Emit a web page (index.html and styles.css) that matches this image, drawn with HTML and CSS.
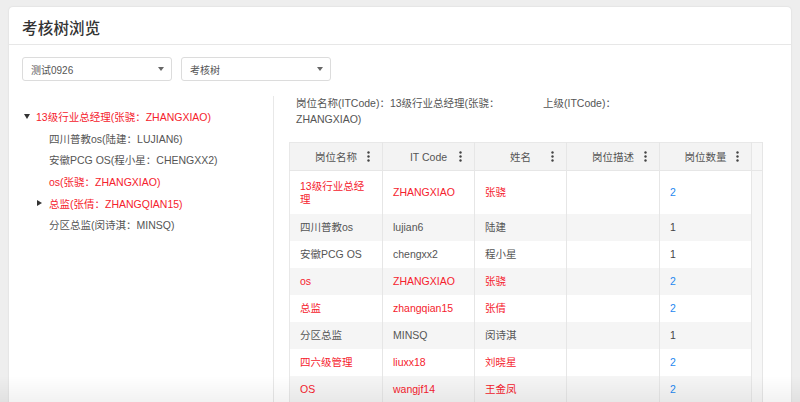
FILE: index.html
```html
<!DOCTYPE html>
<html lang="zh-CN">
<head>
<meta charset="utf-8">
<title>考核树浏览</title>
<link rel="stylesheet" href="styles.css">
</head>
<body>
<div class="card">
  <div class="card-header"><h1 class="title">考核树浏览</h1></div>
  <div class="toolbar">
    <div class="select"><span>测试0926</span><i class="caret"></i></div>
    <div class="select"><span>考核树</span><i class="caret"></i></div>
  </div>
  <div class="content">
    <div class="tree">
      <div class="node red"><i class="tog open"></i><span>13级行业总经理(张骁：ZHANGXIAO)</span></div>
      <div class="node child"><i class="tog"></i><span>四川普教os(陆建：LUJIAN6)</span></div>
      <div class="node child"><i class="tog"></i><span>安徽PCG OS(程小星：CHENGXX2)</span></div>
      <div class="node child red"><i class="tog"></i><span>os(张骁：ZHANGXIAO)</span></div>
      <div class="node child red"><i class="tog closed"></i><span>总监(张倩：ZHANGQIAN15)</span></div>
      <div class="node child"><i class="tog"></i><span>分区总监(闵诗淇：MINSQ)</span></div>
    </div>
    <div class="detail">
      <div class="info">
        <div class="info-item">岗位名称(ITCode)：13级行业总经理(张骁：ZHANGXIAO)</div>
        <div class="info-item">上级(ITCode)：</div>
      </div>
      <table class="grid">
        <colgroup>
          <col class="c93"><col class="c92"><col class="c92"><col class="c93"><col class="c92"><col class="cgut">
        </colgroup>
        <thead>
          <tr>
            <th><div class="th"><span class="lbl">岗位名称</span><svg class="menu" viewBox="0 0 3 11" width="3" height="11"><circle cx="1.5" cy="1.5" r="1.2"/><circle cx="1.5" cy="5.5" r="1.2"/><circle cx="1.5" cy="9.5" r="1.2"/></svg></div></th>
            <th><div class="th"><span class="lbl">IT Code</span><svg class="menu" viewBox="0 0 3 11" width="3" height="11"><circle cx="1.5" cy="1.5" r="1.2"/><circle cx="1.5" cy="5.5" r="1.2"/><circle cx="1.5" cy="9.5" r="1.2"/></svg></div></th>
            <th><div class="th"><span class="lbl">姓名</span><svg class="menu" viewBox="0 0 3 11" width="3" height="11"><circle cx="1.5" cy="1.5" r="1.2"/><circle cx="1.5" cy="5.5" r="1.2"/><circle cx="1.5" cy="9.5" r="1.2"/></svg></div></th>
            <th><div class="th"><span class="lbl">岗位描述</span><svg class="menu" viewBox="0 0 3 11" width="3" height="11"><circle cx="1.5" cy="1.5" r="1.2"/><circle cx="1.5" cy="5.5" r="1.2"/><circle cx="1.5" cy="9.5" r="1.2"/></svg></div></th>
            <th><div class="th"><span class="lbl">岗位数量</span><svg class="menu" viewBox="0 0 3 11" width="3" height="11"><circle cx="1.5" cy="1.5" r="1.2"/><circle cx="1.5" cy="5.5" r="1.2"/><circle cx="1.5" cy="9.5" r="1.2"/></svg></div></th>
            <th class="gut"></th>
          </tr>
        </thead>
        <tbody>
          <tr class="red tall"><td>13级行业总经理</td><td>ZHANGXIAO</td><td>张骁</td><td></td><td class="num">2</td><td class="gut"></td></tr>
          <tr><td>四川普教os</td><td>lujian6</td><td>陆建</td><td></td><td class="one">1</td><td class="gut"></td></tr>
          <tr><td>安徽PCG OS</td><td>chengxx2</td><td>程小星</td><td></td><td class="one">1</td><td class="gut"></td></tr>
          <tr class="red"><td>os</td><td>ZHANGXIAO</td><td>张骁</td><td></td><td class="num">2</td><td class="gut"></td></tr>
          <tr class="red"><td>总监</td><td>zhangqian15</td><td>张倩</td><td></td><td class="num">2</td><td class="gut"></td></tr>
          <tr><td>分区总监</td><td>MINSQ</td><td>闵诗淇</td><td></td><td class="one">1</td><td class="gut"></td></tr>
          <tr class="red"><td>四六级管理</td><td>liuxx18</td><td>刘晓星</td><td></td><td class="num">2</td><td class="gut"></td></tr>
          <tr class="red"><td>OS</td><td>wangjf14</td><td>王金凤</td><td></td><td class="num">2</td><td class="gut"></td></tr>
        </tbody>
      </table>
    </div>
  </div>
</div>
<div class="fade"></div>
</body>
</html>
```

FILE: styles.css
```css
* { box-sizing: border-box; }
html, body { height: 100%; }
body {
  margin: 0;
  padding: 7px 9px 0 9px;
  background: #eeeeee;
  font-family: "Liberation Sans", "Noto Sans CJK SC", sans-serif;
  font-size: 10.5px;
  color: #555;
  overflow: hidden;
}
.card {
  background: #fff;
  border-radius: 4px;
  box-shadow: 0 0 2px rgba(0,0,0,0.12);
  min-height: 420px;
}
.card-header {
  height: 38px;
  padding: 3px 13px 0;
  display: flex;
  align-items: center;
  border-bottom: 1px solid #e7e7e7;
}
.title {
  margin: 0;
  font-size: 15.5px;
  font-weight: 500;
  color: #333;
  letter-spacing: 0.2px;
}
.toolbar {
  display: flex;
  gap: 9px;
  padding: 12px 13px 0;
}
.select {
  width: 150px;
  height: 24px;
  border: 1px solid #dcdcdc;
  border-radius: 3px;
  display: flex;
  align-items: center;
  justify-content: space-between;
  padding: 0 7px 0 8px;
  font-size: 10px;
  color: #555;
}
.caret {
  width: 0; height: 0;
  border-left: 3.5px solid transparent;
  border-right: 3.5px solid transparent;
  border-top: 4px solid #666;
}
.content {
  display: flex;
  margin-top: 15px;
}
.tree {
  width: 265px;
  border-right: 1px solid #e8e8e8;
  padding-top: 10px;
  min-height: 320px;
}
.node {
  height: 21.6px;
  display: flex;
  align-items: center;
  padding-left: 12px;
  color: #555;
  white-space: nowrap;
}
.node.child { padding-left: 25px; }
.node.red { color: #f5222d; }
.tog {
  width: 11px;
  height: 10px;
  margin-right: 4px;
  display: flex;
  align-items: center;
  justify-content: center;
}
.tog.open::before {
  content: "";
  border-left: 3px solid transparent;
  border-right: 3px solid transparent;
  border-top: 5px solid #333;
}
.tog.closed::before {
  content: "";
  border-top: 3px solid transparent;
  border-bottom: 3px solid transparent;
  border-left: 5px solid #333;
}
.detail {
  flex: 1;
  padding: 0 0 0 15px;
}
.info {
  display: grid;
  grid-template-columns: 247px 1fr;
  padding-left: 7px;
  line-height: 16px;
  color: #555;
  margin-top: -1px;
}
.info-item { padding-right: 40px; }
.grid {
  margin-top: 15px;
  width: 474px;
  table-layout: fixed;
  border-collapse: collapse;
  border: 1px solid #e8e8e8;
}
.c93 { width: 93px; }
.c92 { width: 92px; }
.cgut { width: 11px; }
.grid th {
  height: 28px;
  padding: 0;
  background: #f3f3f3;
  border-right: 1px solid #e6e6e6;
  border-bottom: 1px solid #e6e6e6;
  font-weight: normal;
  color: #555;
}
.th {
  display: grid;
  grid-template-columns: 1fr auto 1fr;
  align-items: center;
}
.lbl { grid-column: 2; }
.menu {
  grid-column: 3;
  justify-self: end;
  margin-right: 12px;
  fill: #444;
}
.grid td {
  height: 27px;
  padding: 7px 10px;
  line-height: 13px;
  border-right: 1px solid #e6e6e6;
  vertical-align: middle;
  color: #555;
}
.grid tr.tall td { padding: 8.5px 10px; }
.grid tbody tr:nth-child(even) td { background: #f5f5f5; }
.grid tr.red td { color: #f5222d; }
.grid tr td.num { color: #1e88f0; }
.grid tr td.one { color: #444; }
.grid td.gut, .grid th.gut, .grid tbody tr:nth-child(even) td.gut {
  background: #f7f7f7;
  padding: 0;
}
.fade {
  position: fixed;
  left: 0; right: 0; bottom: 0;
  height: 26px;
  background: linear-gradient(rgba(0,0,0,0), rgba(0,0,0,0.05));
  pointer-events: none;
}
```
